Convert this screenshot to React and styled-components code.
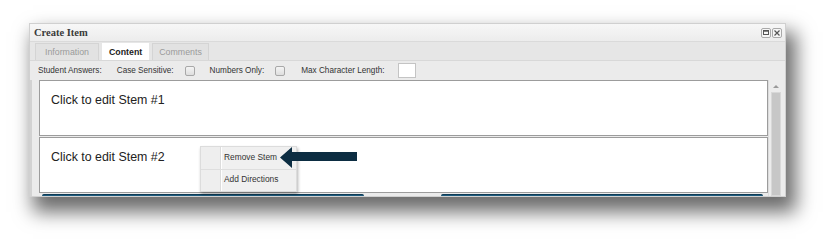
import styled, { createGlobalStyle } from "styled-components";

const GlobalStyle = createGlobalStyle`
  html, body {
    margin: 0;
    padding: 0;
    background: #ffffff;
  }
  body {
    font-family: "Liberation Sans", Arial, sans-serif;
  }
`;

const Page = styled.div`
  width: 834px;
  height: 240px;
  padding: 23px 0 0 29px;
  box-sizing: border-box;
  overflow: hidden;
`;

const Window = styled.div`
  position: relative;
  width: 757px;
  height: 174px;
  box-sizing: border-box;
  background: #ebebeb;
  border: 1px solid #d0d0d0;
  box-shadow: 7px 12px 18px 3px rgba(0, 0, 0, 0.58);
  display: flex;
  flex-direction: column;
  overflow: hidden;
`;

const TitleBar = styled.div`
  height: 17px;
  flex: none;
  display: flex;
  align-items: center;
  justify-content: space-between;
  padding: 0 3px 0 4px;
  background: linear-gradient(#f7f7f7, #ececec);
  border-bottom: 1px solid #dadada;
`;

const Title = styled.span`
  font-family: "Liberation Serif", "Times New Roman", serif;
  font-weight: bold;
  font-size: 10.5px;
  color: #3a3a3a;
`;

const TitleButtons = styled.div`
  display: flex;
  gap: 1px;
`;

const TitleButton = styled.div`
  width: 10px;
  height: 10px;
  box-sizing: border-box;
  border: 1px solid #a9a9a9;
  border-radius: 2px;
  background: #f6f6f6;
  display: flex;
  align-items: center;
  justify-content: center;
`;

const TabRow = styled.div`
  height: 18px;
  flex: none;
  display: flex;
  align-items: flex-end;
  gap: 3px;
  padding-left: 5px;
  border-bottom: 1px solid #d8d8d8;
  background: #e6e6e6;
`;

const Tab = styled.div`
  height: 17px;
  box-sizing: border-box;
  padding: 0 ${(p) => p.$pad}px;
  display: flex;
  align-items: center;
  font-size: 8.8px;
  color: ${(p) => (p.$active ? "#222" : "#9a9a9a")};
  font-weight: ${(p) => (p.$active ? "bold" : "normal")};
  background: ${(p) => (p.$active ? "#ffffff" : "#e2e2e2")};
  border: 1px solid ${(p) => (p.$active ? "#ffffff" : "#d4d4d4")};
  border-bottom: none;
`;

const Toolbar = styled.div`
  height: 19px;
  flex: none;
  display: flex;
  align-items: center;
  padding-left: 8px;
  font-size: 8.2px;
  color: #333;
`;

const Label = styled.span`
  margin-left: ${(p) => p.$gap || 0}px;
`;

const Check = styled.span`
  width: 10px;
  height: 10px;
  box-sizing: border-box;
  margin-left: 11px;
  border: 1px solid #a8a8a8;
  border-radius: 2px;
  background: linear-gradient(#f4f4f4, #dedede);
`;

const NumInput = styled.span`
  width: 18px;
  height: 15px;
  box-sizing: border-box;
  margin-left: 13px;
  border: 1px solid #c4c4c4;
  background: #fff;
`;

const Body = styled.div`
  flex: 1;
  display: flex;
  min-height: 0;
  border-left: 2px solid #d2d2d2;
`;

const Stems = styled.div`
  flex: 1;
  display: flex;
  flex-direction: column;
  gap: 1px;
  padding-left: 7px;
`;

const Stem = styled.div`
  width: 729px;
  height: 56px;
  flex: none;
  box-sizing: border-box;
  background: #fff;
  border: 1px solid #9c9c9c;
  padding: 12px 0 0 11px;
  font-size: 12.4px;
  color: #222;
`;

const ButtonRow = styled.div`
  display: flex;
  gap: 77px;
  padding-left: 3px;
`;

const BlueButton = styled.div`
  width: ${(p) => p.$w}px;
  height: 8px;
  flex: none;
  background: #1d5b7d;
  border-top: 1px solid #0f3b55;
  border-radius: 2px 2px 0 0;
`;

const Scrollbar = styled.div`
  width: 14px;
  flex: none;
  display: flex;
  flex-direction: column;
  align-items: center;
  background: #ececec;
  border-left: 1px solid #dcdcdc;
  margin-right: 4px;
`;

const ScrollArrow = styled.div`
  width: 0;
  height: 0;
  margin: 5px 0 4px;
  border-left: 3px solid transparent;
  border-right: 3px solid transparent;
  border-bottom: 3px solid #9a9a9a;
`;

const ScrollThumb = styled.div`
  width: 10px;
  flex: 1;
  background: #c7c7c7;
  border: 1px solid #d8d8d8;
  box-sizing: border-box;
`;

const Menu = styled.div`
  position: absolute;
  left: 170px;
  top: 122px;
  width: 97px;
  height: 46px;
  box-sizing: border-box;
  background: #f0f0f0;
  border: 1px solid #dcdcdc;
  box-shadow: 1px 2px 3px rgba(0, 0, 0, 0.3);
  display: flex;
  flex-direction: column;
`;

const MenuItem = styled.div`
  flex: 1;
  display: flex;
  align-items: center;
  padding: 0 0 2px 23px;
  font-size: 8.4px;
  color: #333;
  background: linear-gradient(
    to right,
    #eeeeee 0 19px,
    #dcdcdc 19px 20px,
    #ffffff 20px 21px,
    transparent 21px
  );
  border-top: ${(p) => (p.$sep ? "1px solid #dedede" : "none")};
`;

const Arrow = styled.svg`
  position: absolute;
  left: 250px;
  top: 123px;
`;

export default function App() {
  return (
    <>
      <GlobalStyle />
      <Page>
        <Window>
          <TitleBar>
            <Title>Create Item</Title>
            <TitleButtons>
              <TitleButton>
                <svg width="6" height="5" viewBox="0 0 6 5">
                  <rect x="0.5" y="0.5" width="5" height="4" fill="none" stroke="#555" />
                  <rect x="0.5" y="0.5" width="5" height="1.2" fill="#555" />
                </svg>
              </TitleButton>
              <TitleButton>
                <svg width="6" height="6" viewBox="0 0 6 6">
                  <path d="M0.5 0.5 L5.5 5.5 M5.5 0.5 L0.5 5.5" stroke="#555" strokeWidth="1.2" />
                </svg>
              </TitleButton>
            </TitleButtons>
          </TitleBar>
          <TabRow>
            <Tab $pad={9}>Information</Tab>
            <Tab $pad={6} $active>
              Content
            </Tab>
            <Tab $pad={6}>Comments</Tab>
          </TabRow>
          <Toolbar>
            <Label>Student Answers:</Label>
            <Label $gap={15}>Case Sensitive:</Label>
            <Check />
            <Label $gap={15}>Numbers Only:</Label>
            <Check />
            <Label $gap={16}>Max Character Length:</Label>
            <NumInput />
          </Toolbar>
          <Body>
            <Stems>
              <Stem>Click to edit Stem #1</Stem>
              <Stem>Click to edit Stem #2</Stem>
              <ButtonRow>
                <BlueButton $w={322} />
                <BlueButton $w={322} />
              </ButtonRow>
            </Stems>
            <Scrollbar>
              <ScrollArrow />
              <ScrollThumb />
            </Scrollbar>
          </Body>
          <Menu>
            <MenuItem>Remove Stem</MenuItem>
            <MenuItem $sep>Add Directions</MenuItem>
          </Menu>
          <Arrow width="77" height="22" viewBox="0 0 77 22">
            <polygon points="0,10.5 12,0 12,5 77,5 77,14 12,14 12,21" fill="#0c2d42" />
          </Arrow>
        </Window>
      </Page>
    </>
  );
}
